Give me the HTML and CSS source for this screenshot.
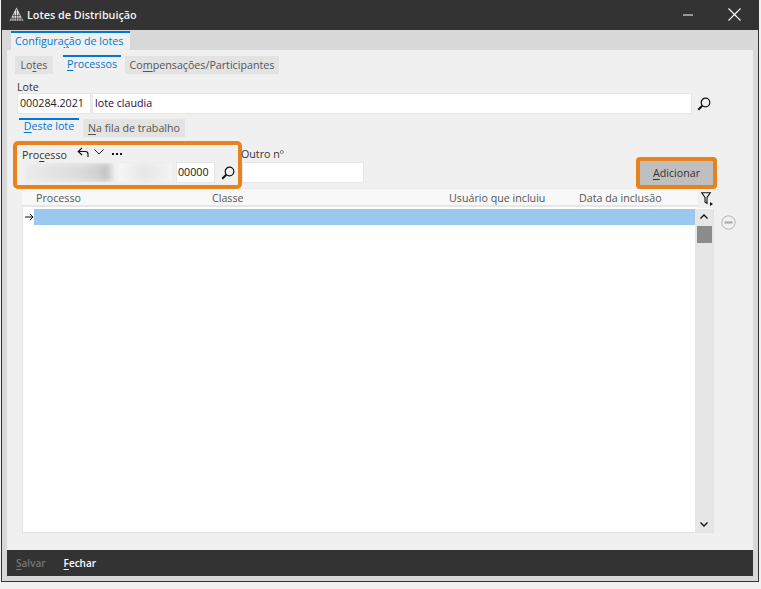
FILE: index.html
```html
<!DOCTYPE html>
<html lang="pt">
<head>
<meta charset="utf-8">
<title>Lotes de Distribuição</title>
<link rel="stylesheet" href="styles.css">
</head>
<body>
<div class="window">
  <header class="titlebar">
    <svg class="logo" width="15" height="15" viewBox="0 0 16 15"><path d="M8 0L15.500 14.500H.5z" fill="#e0e0e0"/><path d="M8 2V14.500M5.500 6V14.500M10.500 6V14.500M3 10V14.500M13 10V14.500M2 11.500H14M4 8.500H12M1 13.500H15" stroke="#333" stroke-width=".7" fill="none"/></svg>
    <span class="title">Lotes de Distribuição</span>
    <span class="winbtns">
      <svg width="10" height="2" viewBox="0 0 10 2"><path d="M0 1H10" stroke="#fff" stroke-width="1"/></svg>
      <svg width="13" height="13" viewBox="0 0 13 13"><path d="M.5 .5L12.500 12.500M12.500 .5L.5 12.500" stroke="#fff" stroke-width="1.100"/></svg>
    </span>
  </header>
  <div class="shell">
    <nav class="toptabs"><span class="toptab">Configura<u>ç</u>ão de lotes</span></nav>
    <main class="panel">
      <div class="subtabs">
        <span class="tab tab-lotes">Lo<u>t</u>es</span>
        <span class="tab tab-on tab-proc"><u>P</u>rocessos</span>
        <span class="tab tab-comp">Co<u>m</u>pensações/Participantes</span>
      </div>
      <label class="lbl lbl-lote"><u>L</u>ote</label>
      <div class="lote-row">
        <div class="field f-num">000284.2021</div>
        <div class="field f-name">lote claudia</div>
        <svg class="search" width="14" height="14" viewBox="0 0 14 14"><circle cx="8.500" cy="5.500" r="4.300" fill="none" stroke="#111" stroke-width="1.200"/><path d="M5.300 8.700L1.200 12.800" stroke="#111" stroke-width="2"/></svg>
      </div>
      <div class="subtabs2">
        <span class="tab2 tab2-on"><u>D</u>este lote</span>
        <span class="tab2 tab2-off"><u>N</u>a fila de trabalho</span>
      </div>
      <div class="form-row">
        <div class="hl-box">
          <div class="proc-head">
            <span class="lbl">Pro<u>c</u>esso</span>
            <svg class="undo" width="12" height="11" viewBox="0 0 12 11"><path d="M5 1L1.200 4.500L5 8M1.500 4.500H8.500C10 4.500 11 5.500 11 7V10" fill="none" stroke="#111" stroke-width="1.100"/></svg>
            <svg class="chev" width="10" height="6" viewBox="0 0 10 6"><path d="M.5 .5L5 5L9.500 .5" fill="none" stroke="#222"/></svg>
            <svg class="dots" width="10" height="2" viewBox="0 0 10 2"><path d="M0 0h2v2H0zM4 0h2v2H4zM8 0h2v2H8z" fill="#111"/></svg>
          </div>
          <div class="proc-fields">
            <div class="blur b1"><i></i></div>
            <div class="blur b2"><i></i></div>
            <div class="field f-zero">00000</div>
            <svg class="search s2" width="14" height="14" viewBox="0 0 14 14"><circle cx="8.500" cy="5.500" r="4.300" fill="none" stroke="#111" stroke-width="1.200"/><path d="M5.300 8.700L1.200 12.800" stroke="#111" stroke-width="2"/></svg>
          </div>
        </div>
        <div class="outro">
          <span class="lbl">Outro nº</span>
          <div class="field f-outro"></div>
        </div>
        <button class="add" type="button"><u>A</u>dicionar</button>
      </div>
      <div class="table-row">
        <section class="grid">
          <div class="thead">
            <span class="th th1">Processo</span>
            <span class="th th2">Classe</span>
            <span class="th th3">Usuário que incluiu</span>
            <span class="th th4">Data da inclusão</span>
            <span class="filter">
              <svg width="12" height="14" viewBox="0 0 12 14"><path d="M.7 .7H9.300L6 5.500V11.500L4 10V5.500z" fill="none" stroke="#111" stroke-width="1.100"/><path d="M9 10L12 12L9 14z" fill="#111"/></svg>
            </span>
          </div>
          <div class="tbody">
            <div class="rows">
              <div class="row">
                <span class="marker"><svg width="9" height="8" viewBox="0 0 9 8"><path d="M0 4H8M4.800 .8L8 4L4.800 7.200" fill="none" stroke="#111"/></svg></span>
                <span class="cell"></span>
              </div>
            </div>
            <div class="scroll">
              <svg class="up" width="8" height="5" viewBox="0 0 8 5"><path d="M.5 4.500L4 1L7.500 4.500" fill="none" stroke="#111" stroke-width="1.300"/></svg>
              <div class="thumb"></div>
              <svg class="down" width="8" height="5" viewBox="0 0 8 5"><path d="M.5 .5L4 4L7.500 .5" fill="none" stroke="#111" stroke-width="1.300"/></svg>
            </div>
          </div>
        </section>
        <svg class="remove" width="15" height="15" viewBox="0 0 15 15"><circle cx="7.500" cy="7.500" r="6.700" fill="none" stroke="#b4b4b4"/><path d="M3.500 7.500H11.500" stroke="#a8a8a8" stroke-width="2"/></svg>
      </div>
    </main>
    <footer class="footer">
      <span class="fbtn fbtn-off"><u>S</u>alvar</span>
      <span class="fbtn"><u>F</u>echar</span>
    </footer>
  </div>
</div>
</body>
</html>
```
FILE: styles.css
```css
* { box-sizing: border-box; }
html, body { margin: 0; padding: 0; }
body {
  width: 761px; height: 589px; overflow: hidden;
  background: #f1f1f1;
  font-family: "Open Sans", "Noto Sans", sans-serif;
  font-size: 10.7px; color: #333;
}
u { text-underline-offset: 2px; text-decoration-thickness: 1px; }
.window {
  margin-left: 1px; width: 758px; height: 582px;
  display: flex; flex-direction: column;
  border: 1px solid #333; border-top: 0;
}
.titlebar {
  height: 30px; margin: 0 -1px; background: #333; color: #fff;
  display: flex; align-items: center; padding: 0 0 1px 8px; flex: none;
}
.logo { margin-right: 3px; }
.title { font-weight: 600; font-size: 10.8px; color: #f4f4f4; }
.winbtns { margin-left: auto; display: flex; align-items: center; gap: 35px; padding-right: 18px; }
.shell { flex: 1; background: #d8d8d8; padding: 0 5px 5px; display: flex; flex-direction: column; min-height: 0; }
.toptabs { height: 20px; padding: 1px 0 0 4px; flex: none; }
.toptab {
  display: block; width: 119px; height: 19px; background: #f0f0f0;
  border-top: 2px solid #0078d7; color: #0078d7; padding-left: 4px; line-height: 17px;
  white-space: nowrap;
}
.panel { flex: 1; background: #f0f0f0; padding: 5px 0 0 10px; min-height: 0; }
.subtabs { display: flex; height: 19px; align-items: flex-end; margin-left: -2px; }
.tab { height: 18px; line-height: 19px; background: #e3e3e3; color: #555; white-space: nowrap; text-align: center; }
.tab-lotes { width: 38px; }
.tab-on { height: 19px; width: 58px; margin: 0 4px 0 10px; background: none; color: #0078d7; border-top: 2px solid #0078d7; line-height: 15px; }
.tab-comp { width: 154px; }
.lbl { color: #333; white-space: nowrap; }
.lbl-lote { display: block; height: 19px; line-height: 26px; }
.field { background: #fff; border: 1px solid #e6e6e6; height: 21px; line-height: 19px; color: #222; padding-left: 2px; white-space: nowrap; }
.lote-row { display: flex; align-items: center; gap: 1px; }
.f-num { width: 74px; }
.f-name { width: 600px; padding-left: 2px; color: #2a0a3a; }
.lote-row .search { margin-left: 4px; }
.subtabs2 { display: flex; align-items: flex-end; height: 19px; margin: 4px 0 0 2px; }
.tab2 { height: 18px; line-height: 19px; white-space: nowrap; text-align: center; }
.tab2-on { width: 60px; height: 19px; color: #0078d7; border-top: 2px solid #0078d7; line-height: 13px; margin-right: 4px; }
.tab2-off { width: 102px; background: #e3e3e3; color: #555; }
.form-row { display: flex; align-items: flex-start; height: 47px; margin: 4px 0 0 -4px; position: relative; z-index: 1; }
.hl-box {
  width: 229px; height: 48px; flex: none;
  border: 4px solid #e8821e; border-radius: 5px; padding: 0 0 0 6px;
}
.proc-head { display: flex; align-items: flex-start; height: 17px; }
.proc-head .lbl { width: 54px; margin: 2px 0 0 -1px; line-height: 16px; }
.undo { margin: 2px 0 0 1px; }
.chev { margin: 4px 0 0 5px; }
.dots { margin: 8px 0 0 8px; }
.proc-fields { display: flex; align-items: center; }
.blur { height: 21px; background: #f3f3f3; border: 1px solid #eee; overflow: hidden; }
.blur i { display: block; width: 100%; height: 100%; filter: blur(3px); }
.b1 { width: 92px; }
.b1 i { background: linear-gradient(90deg, #ebebeb 0%, #dcdcdc 60%, #cfcfcf 85%, #bcbcbc 92%, #f0f0f0 100%); }
.b2 { width: 56px; margin-left: 2px; }
.b2 i { background: linear-gradient(90deg, #f6f6f6 0%, #e6e6e6 50%, #f4f4f4 100%); }
.f-zero { width: 39px; margin-left: 3px; padding-left: 1px; color: #111; }
.s2 { margin-left: 6px; }
.outro { width: 122px; padding-top: 5px; flex: none; }
.outro .lbl { display: block; height: 16px; line-height: 17px; margin-left: -1px; }
.f-outro { width: 122px; }
.add {
  margin: 16px 0 0 272px; width: 81px; height: 32px; flex: none;
  background: #bfbfbf; border: 4px solid #e8821e; border-radius: 4px;
  font: inherit; color: #333; padding: 0;
}
.table-row { display: flex; margin-left: 5px; height: 345px; }
.grid { width: 692px; background: #fff; border: 1px solid #e4e4e4; border-top: 0; display: flex; flex-direction: column; }
.thead { height: 19px; display: flex; background: #f8f8f8; border-bottom: 2px solid #e6e6e6; position: relative; flex: none; margin: 0 -1px; padding-left: 14px; line-height: 19px; color: #555; border-top: 1px solid #ececec; }
.th { white-space: nowrap; }
.th1 { width: 176px; }
.th2 { width: 237px; }
.th3 { width: 130px; }
.th4 { width: 120px; }
.filter { position: absolute; right: 0; top: 1px; line-height: 0; background: #f0f0f0; width: 17px; height: 18px; padding: 2px 0 0 4px; }
.tbody { flex: 1; display: flex; min-height: 0; padding-top: 2px; }
.rows { flex: 1; }
.row { display: flex; height: 16px; }
.marker { width: 11px; display: flex; align-items: center; padding-left: 2px; }
.cell { width: 661px; background: #9bc8ef; }
.scroll { width: 18px; background: #e6e6e6; display: flex; flex-direction: column; align-items: center; padding-top: 5px; }
.thumb { width: 15px; height: 17px; background: #8b8b8b; margin-top: 7px; }
.down { margin-top: auto; margin-bottom: 5px; }
.up { flex: none; }
.remove { margin: 27px 0 0 7px; flex: none; }
.footer { height: 26px; background: #333; display: flex; align-items: center; padding-left: 9px; gap: 18px; flex: none; margin-top: -3px; position: relative; }
.fbtn { color: #fff; font-weight: 600; font-size: 10px; }
.fbtn-off { color: #777; }
```
